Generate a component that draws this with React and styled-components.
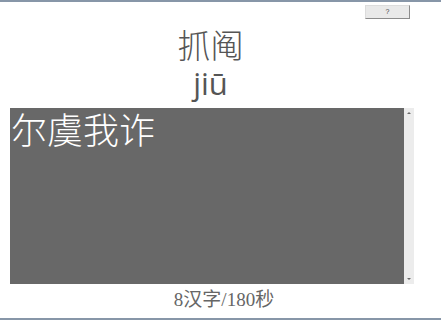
import React from "react";
import styled, { createGlobalStyle } from "styled-components";

const GlobalStyle = createGlobalStyle`
  html, body {
    margin: 0;
    padding: 0;
    background: #ffffff;
  }
  body {
    font-family: "Noto Sans CJK SC", "Liberation Sans", sans-serif;
  }
`;

const Page = styled.div`
  width: 441px;
  height: 320px;
  box-sizing: border-box;
  display: flex;
  flex-direction: column;
  background: #ffffff;
  border-top: 2px solid #8796a8;
  border-bottom: 2px solid #8796a8;
`;

const Toolbar = styled.div`
  display: flex;
  justify-content: flex-end;
  padding: 3px 31px 0 0;
`;

const HelpButton = styled.button`
  width: 45px;
  height: 14px;
  padding: 0;
  font-family: "Liberation Sans", sans-serif;
  font-size: 7px;
  line-height: 12px;
  color: #444;
  background: #e9e9e9;
  border: 1px solid #dcdcdc;
  border-right-color: #8c8c8c;
  border-bottom-color: #8c8c8c;
`;

const Title = styled.div`
  margin-top: 9px;
  padding-right: 20px;
  text-align: center;
  font-size: 33px;
  line-height: 33px;
  font-weight: 300;
  color: #555555;
`;

const Pinyin = styled.div`
  margin-top: 5px;
  padding-right: 20px;
  text-align: center;
  font-family: "Open Sans", "Noto Sans", sans-serif;
  font-size: 31px;
  line-height: 34px;
  color: #555555;
`;

const Editor = styled.div`
  margin: 8px 0 0 10px;
  width: 404px;
  height: 176px;
  display: flex;
`;

const Pane = styled.div`
  flex: 1;
  background: #686868;
  padding: 0 1px;
  font-size: 36px;
  line-height: 40px;
  font-weight: 300;
  color: #ffffff;
`;

const ScrollBar = styled.div`
  width: 10px;
  background: #ececec;
  display: flex;
  flex-direction: column;
  justify-content: space-between;
  align-items: center;
  padding: 4px 0;
`;

const Arrow = styled.span`
  width: 0;
  height: 0;
  border-left: 2px solid transparent;
  border-right: 2px solid transparent;
  ${(p) =>
    p.$down
      ? "border-top: 2px solid #6a6a6a;"
      : "border-bottom: 2px solid #6a6a6a;"}
`;

const Footer = styled.div`
  margin-top: 4px;
  padding-left: 7px;
  text-align: center;
  font-family: "Liberation Serif", "Noto Sans CJK SC", serif;
  font-size: 19px;
  line-height: 24px;
  color: #666666;
`;

export default function App() {
  return (
    <>
      <GlobalStyle />
      <Page>
        <Toolbar>
          <HelpButton>?</HelpButton>
        </Toolbar>
        <Title>抓阄</Title>
        <Pinyin>jiū</Pinyin>
        <Editor>
          <Pane>尔虞我诈</Pane>
          <ScrollBar>
            <Arrow />
            <Arrow $down />
          </ScrollBar>
        </Editor>
        <Footer>8汉字/180秒</Footer>
      </Page>
    </>
  );
}
